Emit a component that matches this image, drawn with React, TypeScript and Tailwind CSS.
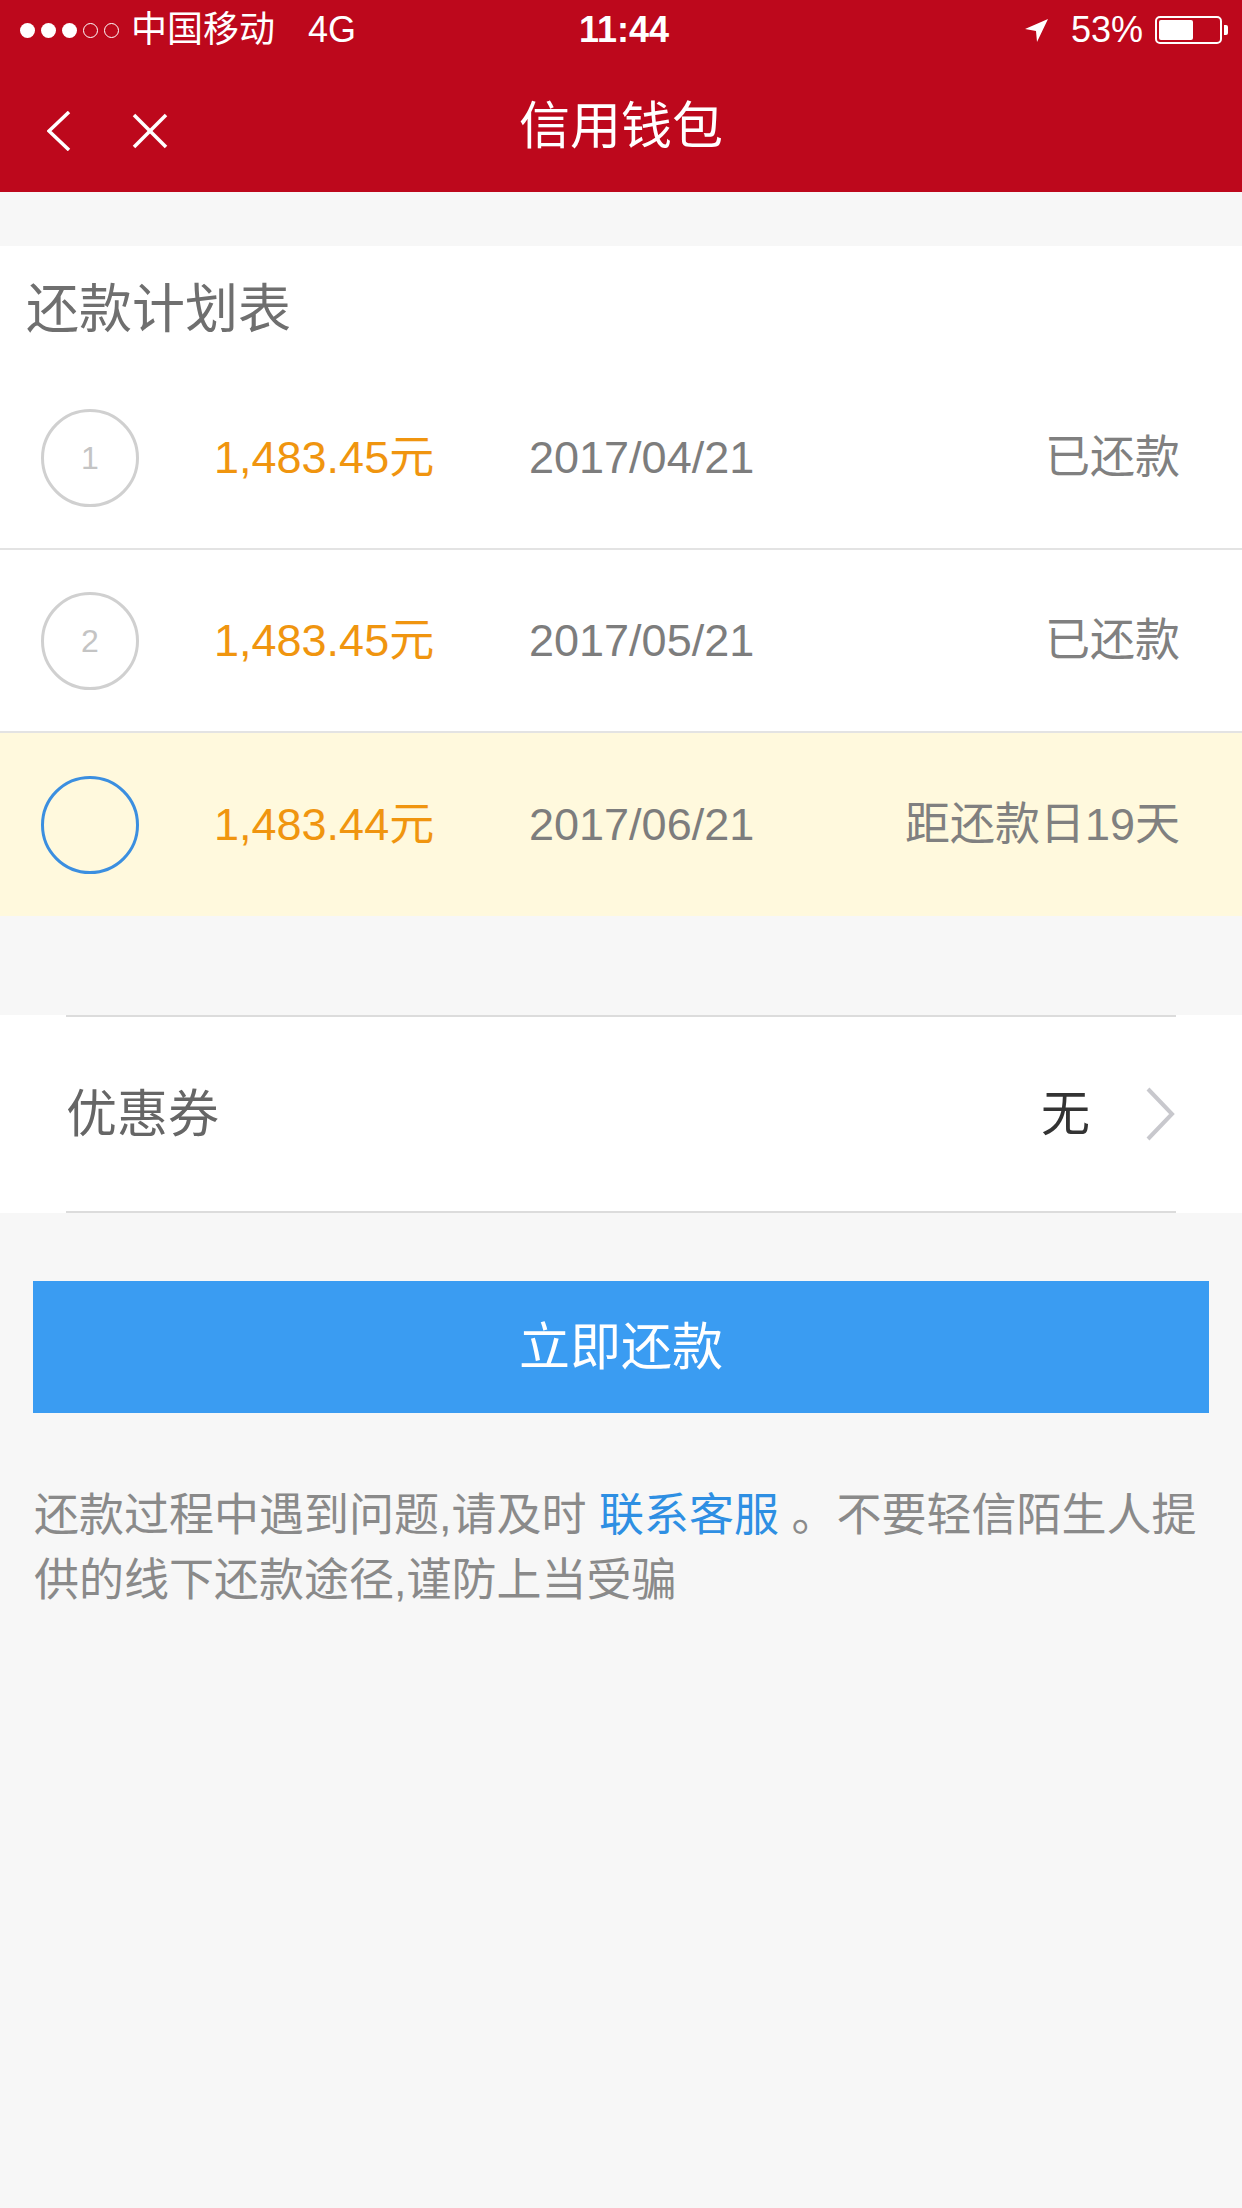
import React from 'react';

type Plan = { no: number; amount: string; date: string; status: string; current?: boolean };

const plans: Plan[] = [
  { no: 1, amount: '1,483.45元', date: '2017/04/21', status: '已还款' },
  { no: 2, amount: '1,483.45元', date: '2017/05/21', status: '已还款' },
  { no: 3, amount: '1,483.44元', date: '2017/06/21', status: '距还款日19天', current: true },
];

const StatusBar: React.FC = () => (
  <div className="h-[60px] flex items-center text-white text-[36px] leading-none">
    <div className="flex-1 flex items-center pl-[20px]">
      <div className="flex items-center gap-[6px]">
        <span className="w-[15px] h-[15px] rounded-full bg-white" />
        <span className="w-[15px] h-[15px] rounded-full bg-white" />
        <span className="w-[15px] h-[15px] rounded-full bg-white" />
        <span className="w-[15px] h-[15px] rounded-full border-[1.5px] border-white" />
        <span className="w-[15px] h-[15px] rounded-full border-[1.5px] border-white" />
      </div>
      <span className="ml-[12px]">中国移动</span>
      <span className="ml-[33px]">4G</span>
    </div>
    <div className="font-semibold">11:44</div>
    <div className="flex-1 flex items-center justify-end pr-[14px]">
      <svg width="25" height="25" viewBox="0 0 25 25">
        <path d="M24 1 L1 11 L12 13 L13 24 Z" fill="white" />
      </svg>
      <span className="ml-[22px]">53%</span>
      <div className="ml-[12px] flex items-center">
        <div className="w-[67px] h-[28px] rounded-[5px] border-[2px] border-white p-[2px]">
          <div className="w-[34px] h-full bg-white rounded-[2px]" />
        </div>
        <div className="w-[4px] h-[10px] bg-white rounded-r-[2px] ml-[2px]" />
      </div>
    </div>
  </div>
);

const NavBar: React.FC = () => (
  <div className="h-[132px] flex items-center">
    <div className="w-[300px] flex items-center pl-[47px] pt-[10px]">
      <svg width="24" height="40" viewBox="0 0 24 40">
        <polyline points="22,1 2,20 22,39" fill="none" stroke="white" strokeWidth="3.5" />
      </svg>
      <svg width="36" height="36" viewBox="0 0 36 36" className="ml-[61px]">
        <line x1="2" y1="2" x2="34" y2="34" stroke="white" strokeWidth="3.5" />
        <line x1="34" y1="2" x2="2" y2="34" stroke="white" strokeWidth="3.5" />
      </svg>
    </div>
    <div className="flex-1 text-center text-white text-[51px] leading-none">信用钱包</div>
    <div className="w-[300px]" />
  </div>
);

const PlanRow: React.FC<{ plan: Plan; last: boolean }> = ({ plan, last }) => (
  <div
    className={`h-[183px] flex items-center pl-[41px] pr-[62px] text-[45px] leading-none ${
      plan.current ? 'bg-[#fff9dd]' : 'bg-white'
    } ${last ? '' : 'border-b-[2px] border-[#e3e3e3]'}`}
  >
    <div
      className={`w-[98px] h-[98px] rounded-full border-[3px] flex items-center justify-center text-[32px] text-[#c4c4c4] ${
        plan.current ? 'border-[#3b8fe0]' : 'border-[#d0d0d0]'
      }`}
    >
      {plan.current ? '' : plan.no}
    </div>
    <div className="ml-[75px] w-[315px] text-[#f0950f]">{plan.amount}</div>
    <div className="text-[#7d7d7d]">{plan.date}</div>
    <div className="flex-1 text-right text-[#808080]">{plan.status}</div>
  </div>
);

const App: React.FC = () => {
  return (
    <div className="min-h-[2208px] bg-[#f7f7f7] font-['Liberation_Sans','Noto_Sans_CJK_SC',sans-serif]">
      {/* Header */}
      <div className="bg-[#bd081c]">
        <StatusBar />
        <NavBar />
      </div>

      <div className="h-[54px]" />

      {/* Repayment plan */}
      <div className="bg-white">
        <div className="h-[121px] flex items-center pl-[26px] pt-[6px] text-[53px] leading-none text-[#6f6f6f]">
          还款计划表
        </div>
        {plans.map((plan, i) => (
          <PlanRow key={plan.no} plan={plan} last={i === plans.length - 1} />
        ))}
      </div>

      <div className="h-[99px]" />

      {/* Coupon */}
      <div className="bg-white px-[66px]">
        <div className="h-[198px] border-y-[2px] border-[#dcdcdc] flex items-center leading-none">
          <span className="text-[51px] text-[#666666]">优惠券</span>
          <span className="ml-auto text-[49px] text-[#333333]">无</span>
          <svg width="32" height="54" viewBox="0 0 32 54" className="ml-[54px]">
            <polyline points="4,2 28,27 4,52" fill="none" stroke="#c8c8cd" strokeWidth="4" />
          </svg>
        </div>
      </div>

      {/* Repay button */}
      <div className="px-[33px] pt-[68px]">
        <button className="w-full h-[132px] bg-[#3a9cf2] text-white text-[51px] leading-none">
          立即还款
        </button>
      </div>

      {/* Notice */}
      <div className="px-[34px] pt-[70px] text-[45px] leading-[65px] text-[#8a8a8a]">
        <div className="whitespace-nowrap">
          还款过程中遇到问题,请及时 <span className="text-[#2e8fe3]">联系客服</span> 。不要轻信陌生人提
        </div>
        <div>供的线下还款途径,谨防上当受骗</div>
      </div>
    </div>
  );
};

export default App;
